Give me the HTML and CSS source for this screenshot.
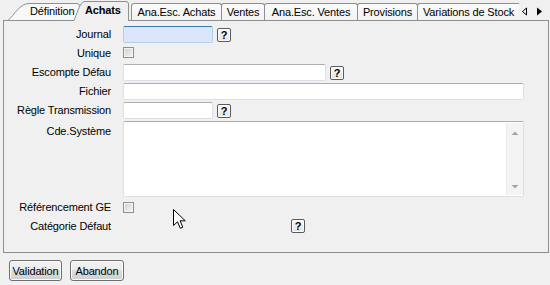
FILE: index.html
```html
<!DOCTYPE html>
<html lang="fr">
  <head>
    <meta charset="UTF-8" />
    <title>Achats</title>
    <link rel="stylesheet" href="styles.css">
  </head>
  <body>
    <div class="window">
      <div class="tabs">
        <div class="tab tab-first">
          <svg class="tab-shape" viewBox="0 0 72 17" preserveAspectRatio="none">
            <path d="M0.5 17 C6 12, 12 0.5, 21 0.5 L69 0.5 Q71.5 0.5 71.5 3 L71.5 17" />
          </svg>
          <span>Définition</span>
        </div>
        <div class="tab tab-active">
          <svg class="tab-shape" viewBox="0 0 56 20" preserveAspectRatio="none">
            <path d="M0.5 20 C4 15, 6 0.5, 12 0.5 L53 0.5 Q55.5 0.5 55.5 3 L55.5 20" />
          </svg>
          <span>Achats</span>
        </div>
        <div class="tab tab-plain tab-ana-achats">Ana.Esc. Achats</div>
        <div class="tab tab-plain tab-ventes">Ventes</div>
        <div class="tab tab-plain tab-ana-ventes">Ana.Esc. Ventes</div>
        <div class="tab tab-plain tab-provisions">Provisions</div>
        <div class="tab tab-plain tab-variations">Variations de Stock</div>
        <div class="tab-arrows">
          <svg width="30" height="18" viewBox="0 0 30 18">
            <path d="M7.5 6 L3.5 9.5 L7.5 13 Z" fill="none" stroke="#000" />
            <path d="M18 5.5 L23 9.5 L18 13.5 Z" fill="#000" />
          </svg>
        </div>
      </div>

      <div class="panel">
        <div class="form">
          <label class="field-label">Journal</label>
          <div class="field">
            <span class="input input-short input-focus"></span>
            <span class="help">?</span>
          </div>

          <label class="field-label">Unique</label>
          <div class="field">
            <span class="check check-up"></span>
          </div>

          <label class="field-label">Escompte Défau</label>
          <div class="field">
            <span class="input input-medium"></span>
            <span class="help">?</span>
          </div>

          <label class="field-label">Fichier</label>
          <div class="field">
            <span class="input input-full"></span>
          </div>

          <label class="field-label">Règle Transmission</label>
          <div class="field">
            <span class="input input-short"></span>
            <span class="help">?</span>
          </div>

          <label class="field-label field-label-top">Cde.Système</label>
          <div class="field">
            <div class="memo">
              <div class="memo-text"></div>
              <div class="scrollbar">
                <svg width="16" height="8" viewBox="0 0 16 8">
                  <path d="M4.5 6 L8 2.5 L11.5 6 Z" fill="#a6a6a6" />
                </svg>
                <svg width="16" height="8" viewBox="0 0 16 8">
                  <path d="M4.5 2 L8 5.5 L11.5 2 Z" fill="#a6a6a6" />
                </svg>
              </div>
            </div>
          </div>

          <label class="field-label">Référencement GE</label>
          <div class="field">
            <span class="check"></span>
          </div>

          <label class="field-label">Catégorie Défaut</label>
          <div class="field">
            <span class="help help-far">?</span>
          </div>
        </div>
      </div>

      <div class="actions">
        <button class="btn btn-validation">Validation</button>
        <button class="btn btn-abandon">Abandon</button>
      </div>

      <svg class="cursor" width="14" height="21" viewBox="0 0 14 21">
        <path d="M0.5 0.5 L0.5 16.5 L4.5 12.8 L7.3 19.3 L9.8 18.2 L7.1 11.8 L12.3 11.8 Z" fill="#fff" stroke="#000" />
      </svg>
    </div>
  </body>
</html>
```

FILE: styles.css
```css
body {
  margin: 0;
  background-color: #f0f0f0;
  font-family: "Liberation Sans", Arial, sans-serif;
  font-size: 11px;
  letter-spacing: -0.15px;
  color: #000;
}

.window {
  position: relative;
  width: 550px;
  height: 285px;
}

/* tab strip */

.tabs {
  position: relative;
  z-index: 2;
  display: flex;
  align-items: flex-end;
  height: 21px;
  margin-bottom: -1px;
  padding-left: 8px;
}

.tab {
  position: relative;
  box-sizing: border-box;
  height: 17px;
  margin-bottom: 1px;
  line-height: 16px;
  white-space: nowrap;
}

.tab span {
  position: relative;
}

.tab-shape {
  position: absolute;
  left: 0;
  top: 0;
  width: 100%;
  height: 100%;
}

.tab-shape path {
  fill: #f8f8f8;
  stroke: #8e8f8f;
}

.tab-first {
  width: 72px;
  padding-left: 22px;
}

.tab-active {
  width: 56px;
  height: 20px;
  margin-left: -7px;
  margin-bottom: 0;
  padding-left: 12px;
  font-weight: bold;
  line-height: 19px;
  z-index: 3;
}

.tab-active .tab-shape path {
  fill: #f0f0f0;
}

.tab-plain {
  border: 1px solid #8e8f8f;
  border-bottom: none;
  border-radius: 3px 3px 0 0;
  background: linear-gradient(#fbfbfb, #f2f2f2);
  text-align: center;
}

.tab-ana-achats {
  width: 91px;
  margin-left: 2px;
}

.tab-ventes {
  width: 44px;
  margin-left: -1px;
}

.tab-ana-ventes {
  width: 94px;
  margin-left: -1px;
}

.tab-provisions {
  width: 61px;
  margin-left: -1px;
}

.tab-variations {
  width: 102px;
  margin-left: -1px;
  padding-left: 5px;
  border-right: none;
  border-radius: 3px 0 0 0;
  text-align: left;
  overflow: hidden;
}

.tab-arrows {
  width: 30px;
  height: 18px;
  margin-bottom: 1px;
  background-color: #f0f0f0;
}

/* page panel */

.panel {
  box-sizing: border-box;
  width: 546px;
  height: 233px;
  margin-left: 3px;
  border: 1px solid #8e8f8f;
  background-color: #f0f0f0;
}

.form {
  display: grid;
  grid-template-columns: 107px 1fr;
  grid-template-rows: repeat(5, 17px) 76px 17px 17px;
  column-gap: 12px;
  row-gap: 2px;
  padding-top: 5px;
}

.field-label {
  align-self: center;
  text-align: right;
  line-height: 13px;
  white-space: nowrap;
}

.field-label-top {
  align-self: start;
  padding-top: 4px;
}

.field {
  display: flex;
  align-items: center;
  gap: 4px;
}

.input {
  box-sizing: border-box;
  height: 17px;
  border: 1px solid #dcdfe6;
  border-top-color: #abadb3;
  border-radius: 2px;
  background-color: #fff;
}

.input-short {
  width: 90px;
}

.input-medium {
  width: 203px;
}

.input-full {
  width: 401px;
}

.input-focus {
  border-color: #b5cfe7;
  border-top-color: #3d7bad;
  background-color: #dce6fb;
}

.help {
  box-sizing: border-box;
  width: 14px;
  height: 14px;
  border: 1px solid #5a5a5a;
  border-radius: 2px;
  background: linear-gradient(#f7f7f7, #e4e4e4);
  box-shadow: inset 0 0 0 1px #fff;
  font-weight: bold;
  font-size: 11px;
  line-height: 12px;
  letter-spacing: 0;
  text-align: center;
}

.help-far {
  margin-left: 168px;
  margin-top: -2px;
}

.check {
  box-sizing: border-box;
  width: 11px;
  height: 11px;
  border: 1px solid #8f8f8f;
  background: linear-gradient(135deg, #cfcfcf, #f6f6f6);
  box-shadow: inset 0 0 0 1px #f4f4f4;
}

.check-up {
  margin-top: -3px;
}

.memo {
  box-sizing: border-box;
  display: flex;
  width: 401px;
  height: 76px;
  border: 1px solid #dcdfe6;
  border-top-color: #abadb3;
  border-radius: 2px;
  background-color: #fff;
}

.memo-text {
  flex: 1;
}

.scrollbar {
  display: flex;
  flex-direction: column;
  justify-content: space-between;
  width: 16px;
  margin: 1px 0;
  padding: 6px 0 4px;
  border-left: 1px solid #ebebeb;
  background-color: #f4f4f4;
}

/* buttons */

.actions {
  display: flex;
  gap: 8px;
  padding: 7px 0 0 9px;
}

.btn {
  box-sizing: border-box;
  height: 21px;
  padding: 0;
  border: 1px solid #707070;
  border-radius: 3px;
  background: linear-gradient(#f2f2f2 0%, #ebebeb 50%, #dddddd 50%, #cfcfcf 100%);
  box-shadow: inset 0 0 0 1px #fbfbfb;
  font-family: "Liberation Sans", Arial, sans-serif;
  font-size: 11px;
  letter-spacing: -0.15px;
  color: #000;
}

.btn-validation {
  width: 53px;
}

.btn-abandon {
  width: 54px;
}

.cursor {
  position: absolute;
  left: 173px;
  top: 209px;
}
```
